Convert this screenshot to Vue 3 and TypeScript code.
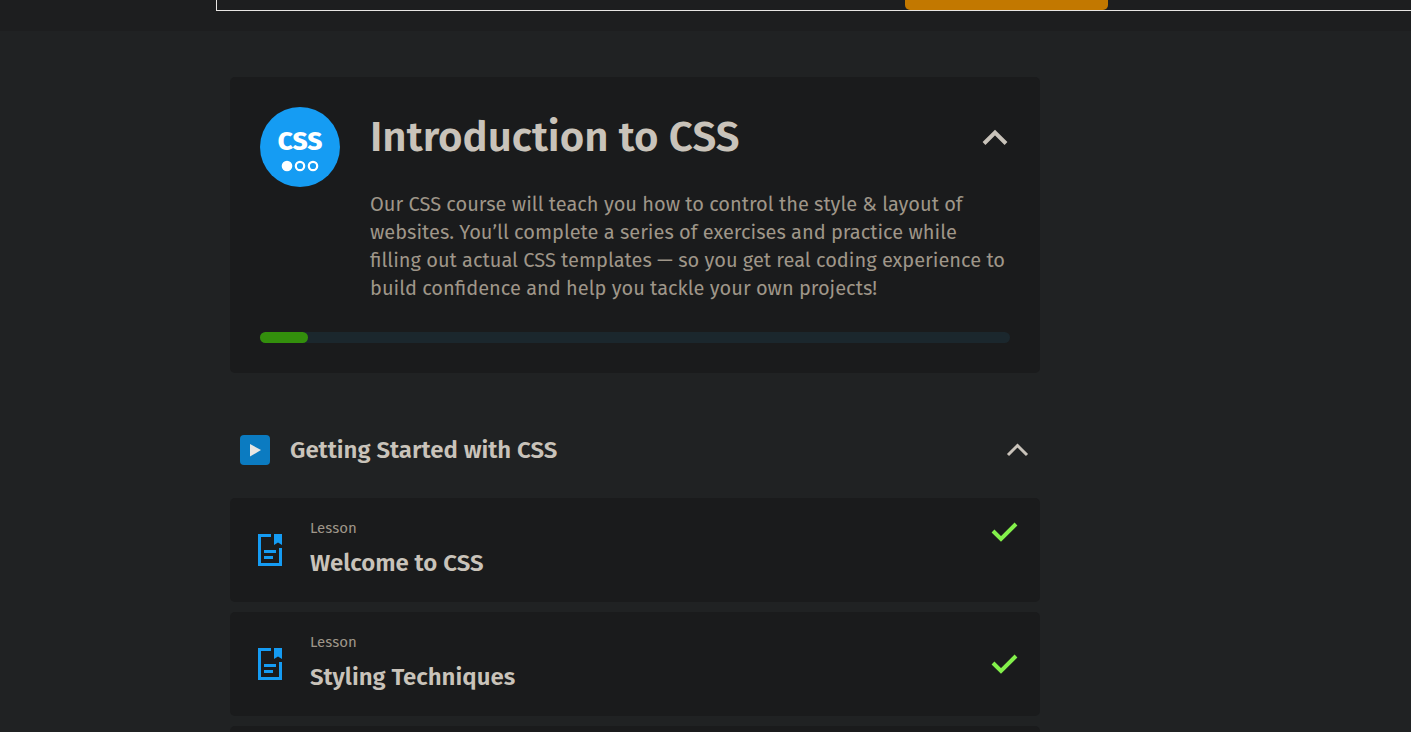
<script setup lang="ts">
import { ref } from 'vue'

interface Lesson {
  kind: string
  title: string
  check: 'upper' | 'middle'
}

const courseOpen = ref(true)
const sectionOpen = ref(true)

const lessons: Lesson[] = [
  { kind: 'Lesson', title: 'Welcome to CSS', check: 'upper' },
  { kind: 'Lesson', title: 'Styling Techniques', check: 'middle' },
]
</script>

<template>
  <div class="page">
    <header class="banner">
      <div class="banner-frame">
        <button class="banner-button" type="button" aria-label="Continue"></button>
      </div>
    </header>

    <main class="content">
      <section class="course">
        <div class="course-head">
          <svg class="course-logo" viewBox="0 0 80 80" role="img" aria-label="CSS course">
            <circle cx="40" cy="40" r="40" fill="#159cf3" />
            <text x="40" y="43" text-anchor="middle" class="logo-text">CSS</text>
            <circle cx="27" cy="59" r="5.3" fill="#fff" />
            <circle cx="40" cy="59" r="4.2" fill="none" stroke="#fff" stroke-width="2.2" />
            <circle cx="53" cy="59" r="4.2" fill="none" stroke="#fff" stroke-width="2.2" />
          </svg>
          <div class="course-body">
            <div class="course-title-row">
              <h1>Introduction to CSS</h1>
              <button
                class="toggle"
                type="button"
                aria-label="Toggle course"
                :aria-expanded="courseOpen"
                @click="courseOpen = !courseOpen"
              >
                <svg width="30" height="20" viewBox="0 0 30 20">
                  <path d="M4 16.500 L15 5.500 L26 16.500" fill="none" stroke="#c9c3ba" stroke-width="4" />
                </svg>
              </button>
            </div>
            <p>
              Our CSS course will teach you how to control the style &amp; layout of<br />
              websites. You’ll complete a series of exercises and practice while<br />
              filling out actual CSS templates — so you get real coding experience to<br />
              build confidence and help you tackle your own projects!
            </p>
          </div>
        </div>
        <div class="progress"><div class="progress-fill"></div></div>
      </section>

      <section>
        <div class="section-head">
          <svg width="30" height="30" viewBox="0 0 30 30">
            <rect width="30" height="30" rx="4" fill="#0b7bc1" />
            <path d="M10 9 L21 15 L10 21.500 Z" fill="#e8e6e3" />
          </svg>
          <h2>Getting Started with CSS</h2>
          <button
            class="toggle"
            type="button"
            aria-label="Toggle section"
            :aria-expanded="sectionOpen"
            @click="sectionOpen = !sectionOpen"
          >
            <svg width="26" height="16" viewBox="0 0 26 16">
              <path d="M4 13 L13.500 3.500 L23 13" fill="none" stroke="#c9c3ba" stroke-width="3" />
            </svg>
          </button>
        </div>

        <ul class="lessons">
          <li v-for="lesson in lessons" :key="lesson.title" class="lesson">
            <svg class="lesson-icon" width="24" height="32" viewBox="0 0 24 32">
              <path
                d="M13 0 V3 H3 V29 H21 V14 H24 V32 H0 V0 Z M16 0 H24 V11 L20 8.500 L16 11 Z M6 16 H18 V19 H6 Z M6 22 H15 V25 H6 Z"
                fill="#159cf3"
              />
            </svg>
            <div class="lesson-text">
              <span>{{ lesson.kind }}</span>
              <h3>{{ lesson.title }}</h3>
            </div>
            <svg class="check" :class="lesson.check" width="28" height="22" viewBox="0 0 28 22">
              <path d="M3 10 L11 18 L26 3" fill="none" stroke="#83f04b" stroke-width="4" />
            </svg>
          </li>
          <li class="lesson"></li>
        </ul>
      </section>
    </main>
  </div>
</template>

<style>
body {
  margin: 0;
  background: #202223;
}
</style>

<style scoped>
.page {
  height: 100vh;
  overflow: hidden;
  background: #202223;
  color: #c9c3ba;
  font-family: "Fira Sans", "Noto Sans", sans-serif;
}
.banner {
  height: 31px;
  background: #1d1e1f;
}
.banner-frame {
  box-sizing: border-box;
  height: 11px;
  margin-left: 216px;
  padding-left: 688px;
  border: solid #e8e6e3;
  border-width: 0 0 1px 1px;
}
.banner-button {
  display: block;
  width: 203px;
  height: 10px;
  padding: 0;
  border: 0;
  border-radius: 0 0 5px 5px;
  background: #c27800;
}
.content {
  max-width: 810px;
  margin: 46px 230px 0;
}
.course {
  padding: 30px;
  border-radius: 5px;
  background: #1a1b1c;
}
.course-head {
  display: flex;
  gap: 30px;
}
.course-logo {
  flex: none;
  width: 80px;
  height: 80px;
}
.logo-text {
  fill: #fff;
  font: 800 26px "Fira Sans", "Noto Sans", sans-serif;
}
.course-body {
  flex: 1;
  min-width: 0;
}
.course-title-row {
  display: flex;
  align-items: center;
  justify-content: space-between;
  height: 60px;
}
h1,
h2,
h3,
p {
  margin: 0;
  white-space: nowrap;
}
h1 {
  font-size: 42px;
  font-weight: 600;
  line-height: 60px;
}
.toggle {
  display: flex;
  padding: 0;
  border: 0;
  background: none;
}
p {
  margin-top: 23px;
  color: #9f9689;
  font-size: 20px;
  line-height: 28px;
}
.progress {
  height: 11px;
  margin-top: 30px;
  border-radius: 6px;
  background: #1b272d;
}
.progress-fill {
  width: 48px;
  height: 11px;
  border-radius: 6px;
  background: #338f0c;
}
.section-head {
  display: flex;
  align-items: center;
  gap: 20px;
  margin-top: 60px;
  padding: 0 10px;
  height: 34px;
}
h2 {
  flex: 1;
  font-size: 24px;
  font-weight: 600;
  line-height: 34px;
}
.lessons {
  display: flex;
  flex-direction: column;
  gap: 10px;
  margin: 31px 0 0;
  padding: 0;
  list-style: none;
}
.lesson {
  display: flex;
  align-items: center;
  box-sizing: border-box;
  min-height: 104px;
  padding: 0 22px 0 28px;
  border-radius: 5px;
  background: #1a1b1c;
}
.lesson-text {
  flex: 1;
  margin-left: 28px;
  padding-bottom: 2px;
}
.lesson-text span {
  display: block;
  color: #9f9689;
  font-size: 15px;
  line-height: 20px;
}
h3 {
  margin-top: 8px;
  font-size: 24px;
  font-weight: 600;
  line-height: 34px;
}
.check.upper {
  align-self: flex-start;
  margin-top: 23px;
}
</style>
